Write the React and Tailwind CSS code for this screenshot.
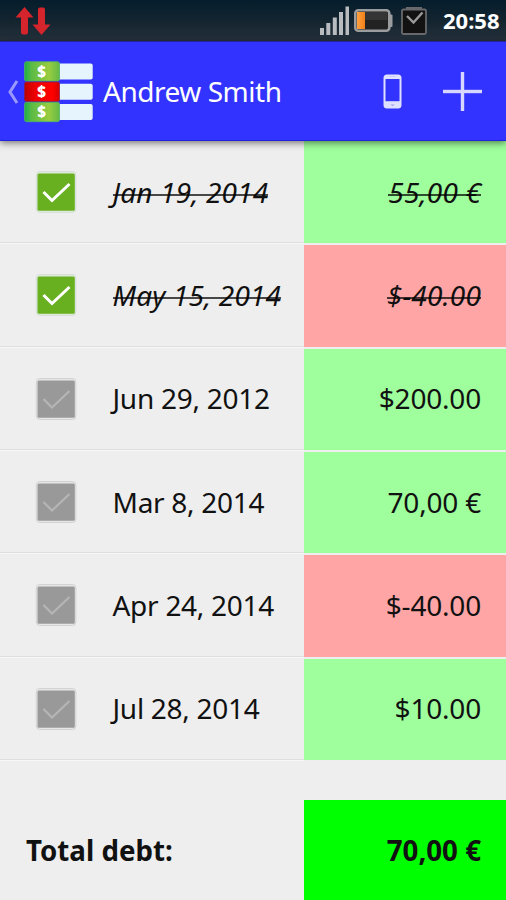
import clsx from 'clsx';

const DEBTS = [
    { id: 1, date: 'Jan 19, 2014', amount: '55,00 €', paid: true, negative: false },
    { id: 2, date: 'May 15, 2014', amount: '$-40.00', paid: true, negative: true },
    { id: 3, date: 'Jun 29, 2012', amount: '$200.00', paid: false, negative: false },
    { id: 4, date: 'Mar 8, 2014', amount: '70,00 €', paid: false, negative: false },
    { id: 5, date: 'Apr 24, 2014', amount: '$-40.00', paid: false, negative: true },
    { id: 6, date: 'Jul 28, 2014', amount: '$10.00', paid: false, negative: false },
];

const SyncIcon = () => (
    <svg width="36" height="28" viewBox="0 0 36 28" fill="#d3252b">
        <path d="M9.5 0 18.5 10.5H13V25.5Q13 27.5 11 27.5H8Q6 27.5 6 25.5V10.5H.5Z" />
        <path d="M26.5 28 17.5 17.5H23V2.5Q23 .5 25 .5H28Q30 .5 30 2.5V17.5H35.5Z" />
    </svg>
);

const SignalIcon = () => (
    <svg width="30" height="29" viewBox="0 0 30 29" fill="#b9bcbf">
        <rect x="0" y="22" width="4" height="7" />
        <rect x="6.3" y="17" width="4" height="12" />
        <rect x="12.8" y="11.5" width="4" height="17.5" />
        <rect x="19" y="6" width="4" height="23" />
        <rect x="25.5" y="0.5" width="3.5" height="28.5" />
    </svg>
);

const BatteryIcon = () => (
    <svg width="39" height="23" viewBox="0 0 39 23">
        <defs>
            <linearGradient id="charge" x1="0" x2="1">
                <stop offset="0" stopColor="#ffa040" />
                <stop offset="1" stopColor="#f08018" />
            </linearGradient>
        </defs>
        <rect x="35" y="5.5" width="3.5" height="12.5" rx="1" fill="#9a9c9e" />
        <rect x="1.3" y="1.3" width="34" height="20.4" rx="3" fill="#222222" stroke="#9a9c9e" strokeWidth="2.6" />
        <rect x="3" y="3" width="30.5" height="8" fill="#353535" />
        <rect x="3" y="3" width="8" height="17" fill="url(#charge)" />
    </svg>
);

const TaskIcon = () => (
    <svg width="26" height="28" viewBox="0 0 26 28" fill="none">
        <rect x="5" y="0" width="16" height="3" fill="#67696b" />
        <rect x="1" y="2.5" width="24" height="24.5" rx="1.5" fill="#121212" stroke="#67696b" strokeWidth="1.8" />
        <path d="M6 9 12.5 15.5 21.5 5.5" stroke="#9a9a9a" strokeWidth="2.4" />
    </svg>
);

const LogoBar = ({ y, coin, edge }) => (
    <g>
        <rect x="30" y={y + 1.8} width="38.7" height="16" rx="2" fill="#e6f5fd" />
        <rect x="0.5" y={y} width="35" height="19.4" rx="2" fill={coin} stroke={edge} strokeWidth="0.8" />
        <text
            x="17.5"
            y={y + 15}
            textAnchor="middle"
            fill="#ffffff"
            className="font-['Open_Sans',sans-serif] text-[15px] font-extrabold"
        >
            $
        </text>
    </g>
);

const AppLogo = () => (
    <svg width="70" height="62" viewBox="0 0 70 62" className="shrink-0">
        <defs>
            <linearGradient id="green" x1="0" x2="1" y1="0" y2="0">
                <stop offset="0" stopColor="#1fae48" />
                <stop offset="0.2" stopColor="#5abb45" />
                <stop offset="0.7" stopColor="#98cc40" />
                <stop offset="1" stopColor="#62b946" />
            </linearGradient>
            <linearGradient id="red" x1="0" x2="1" y1="0" y2="0">
                <stop offset="0" stopColor="#b80000" />
                <stop offset="0.3" stopColor="#ee0000" />
                <stop offset="0.8" stopColor="#ff0000" />
                <stop offset="1" stopColor="#d20000" />
            </linearGradient>
        </defs>
        <LogoBar y={0.7} coin="url(#green)" edge="#4fb163" />
        <LogoBar y={21} coin="url(#red)" edge="#8a1c50" />
        <LogoBar y={41.3} coin="url(#green)" edge="#4fb163" />
    </svg>
);

const PhoneIcon = () => (
    <svg width="20" height="35" viewBox="0 0 20 35">
        <rect x="0.5" y="0.5" width="18" height="34" rx="3.5" fill="#dfdfff" />
        <rect x="2.5" y="5" width="14" height="22.2" fill="#3333ff" />
        <rect x="6.5" y="2.2" width="6" height="0.8" fill="#c5c5fa" />
        <path d="M7.2 30.5H12L9.6 32Z" fill="#9d9df0" />
    </svg>
);

const StatusBar = () => (
    <div className="flex h-[41px] shrink-0 items-center bg-linear-to-b from-[#051d2c] via-[#13242f] to-[#25313b] pr-[6px] pl-[15px]">
        <SyncIcon />
        <div className="ml-auto flex items-center">
            <SignalIcon />
            <div className="ml-[4px]"><BatteryIcon /></div>
            <div className="ml-[8px]"><TaskIcon /></div>
            <span className="ml-[16px] w-[57px] pb-px text-[22px] leading-none font-bold whitespace-nowrap text-white">20:58</span>
        </div>
    </div>
);

const ActionBar = () => (
    <div className="relative z-10 flex h-[100px] shrink-0 items-center border-t border-b border-t-[#2424a0] border-b-[#2222dd] bg-[#3333ff] pt-px pr-[24px] pl-[7px] shadow-[0_2px_7px_rgba(0,0,0,0.5)]">
        <svg width="12" height="24" viewBox="0 0 12 24" fill="none" stroke="#9999ff" strokeWidth="3">
            <path d="M10 1 3 12 10 23" />
        </svg>
        <div className="ml-[5px]"><AppLogo /></div>
        <h1 className="ml-[9px] pb-[2px] text-[28px] leading-none tracking-[-0.47px] whitespace-nowrap text-white">Andrew Smith</h1>
        <div className="ml-auto flex items-center">
            <PhoneIcon />
            <svg width="39" height="39" viewBox="0 0 39 39" fill="#d6d6ff" className="ml-[40px]">
                <rect x="0" y="17.8" width="39" height="3.4" />
                <rect x="17.8" y="0" width="3.4" height="39" />
            </svg>
        </div>
    </div>
);

const CheckBox = ({ checked }) => (
    <svg width="42" height="44" viewBox="0 0 42 44" fill="none" className="shrink-0">
        <rect x="1.3" y="1.5" width="39.6" height="41" rx="3.5" fill={checked ? '#dfeada' : '#e6e6e6'} stroke={checked ? '#d4dfd8' : '#d2d2d2'} strokeWidth="1" />
        <rect x="2.5" y="3.5" width="37.3" height="37.3" rx="1.5" fill={checked ? '#69b020' : '#999999'} />
        <path
            d="M8.5 22 17 30.5 34.5 14"
            stroke={checked ? '#ffffff' : '#b5b5b5'}
            strokeWidth={checked ? 3 : 2.2}
        />
    </svg>
);

// Paid entries are struck out with a line that sits a little below the middle
const PaidText = ({ children }) => (
    <s className="relative tracking-[0.15px] whitespace-nowrap italic no-underline after:absolute after:inset-x-0 after:top-[21px] after:h-[2px] after:bg-black/70">
        {children}
    </s>
);

const DebtRow = ({ debt }) => (
    <div className="group flex min-h-0">
        <div className="flex w-[304px] items-center border-b border-[#f8f8f8] pl-[35px] shadow-[inset_0_-1px_0_#dedede]">
            <CheckBox checked={debt.paid} />
            <div className="ml-[35.5px] pb-px">
                {debt.paid ? (
                    <PaidText>{debt.date}</PaidText>
                ) : (
                    <span className="tracking-[-0.27px] whitespace-nowrap">{debt.date}</span>
                )}
            </div>
        </div>
        <div
            className={clsx(
                'flex flex-1 items-center justify-end border-t border-b border-[#eeeeee] pr-[25px] group-first:border-t-0',
                debt.negative ? 'bg-[#ffa5a5]' : 'bg-[#9fff9c]'
            )}
        >
            <div className="pb-[2px] group-first:pb-px">
                {debt.paid ? (
                    <PaidText>{debt.amount}</PaidText>
                ) : (
                    <span className="tracking-[-0.2px] whitespace-nowrap">{debt.amount}</span>
                )}
            </div>
        </div>
    </div>
);

const App = () => (
    <div className="flex h-[900px] w-[506px] flex-col overflow-hidden bg-[#eeeeee] font-['Noto_Sans',sans-serif] text-[#111111]">
        <StatusBar />
        <ActionBar />
        <div className="grid h-[620px] shrink-0 grid-rows-6 text-[28px] leading-none">
            {DEBTS.map((debt) => (
                <DebtRow key={debt.id} debt={debt} />
            ))}
        </div>

        {/* Total */}
        <div className="mt-[39px] flex h-[100px] shrink-0 text-[27.7px] leading-none font-bold">
            <div className="flex w-[304px] items-center pt-[2px] pl-[26px]">Total debt:</div>
            <div className="flex flex-1 items-center justify-end bg-[#00ff00] pt-[2px] pr-[25px]">70,00 €</div>
        </div>
    </div>
);

export default App;
